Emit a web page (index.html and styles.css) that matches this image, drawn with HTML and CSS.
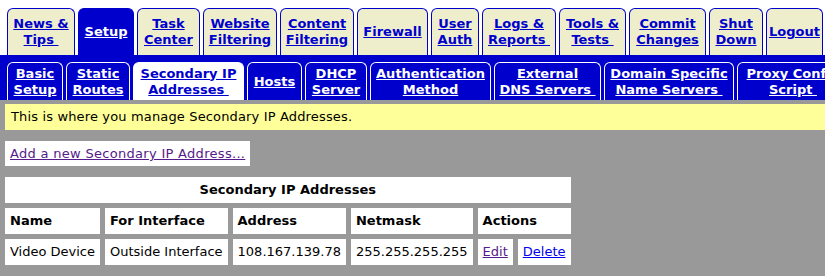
FILE: index.html
```html
<!DOCTYPE html>
<html lang="en">
<head>
    <meta charset="UTF-8">
    <title>Secondary IP Addresses</title>
    <link rel="stylesheet" href="styles.css">
</head>
<body>
    <div class="page">
        <nav class="tabs">
            <a class="tab" href="#">News &amp;<br>Tips&nbsp;</a>
            <a class="tab active" href="#">Setup</a>
            <a class="tab" href="#">Task<br>Center</a>
            <a class="tab" href="#">Website<br>Filtering</a>
            <a class="tab" href="#">Content<br>Filtering</a>
            <a class="tab" href="#">Firewall</a>
            <a class="tab" href="#">User<br>Auth</a>
            <a class="tab" href="#">Logs &amp;<br>Reports&nbsp;</a>
            <a class="tab" href="#">Tools &amp;<br>Tests&nbsp;</a>
            <a class="tab" href="#">Commit<br>Changes</a>
            <a class="tab" href="#">Shut<br>Down</a>
            <a class="tab" href="#">Logout</a>
        </nav>
        <nav class="subtabs">
            <a class="subtab" href="#">Basic<br>Setup</a>
            <a class="subtab" href="#">Static<br>Routes</a>
            <a class="subtab active" href="#">Secondary IP<br>Addresses&nbsp;</a>
            <a class="subtab" href="#">Hosts</a>
            <a class="subtab" href="#">DHCP<br>Server</a>
            <a class="subtab" href="#">Authentication<br>Method</a>
            <a class="subtab" href="#">External<br>DNS Servers&nbsp;</a>
            <a class="subtab" href="#">Domain Specific<br>Name Servers&nbsp;</a>
            <a class="subtab" href="#">Proxy Config<br>Script&nbsp;</a>
        </nav>
        <main class="content">
            <div class="notice">This is where you manage Secondary IP Addresses.</div>
            <div class="add-box"><a class="visited" href="#">Add a new Secondary IP Address...</a></div>
            <table class="list">
                <colgroup>
                    <col class="c-name">
                    <col class="c-iface">
                    <col class="c-addr">
                    <col class="c-mask">
                    <col class="c-edit">
                    <col class="c-del">
                </colgroup>
                <tr>
                    <th class="caption" colspan="6">Secondary IP Addresses</th>
                </tr>
                <tr>
                    <th>Name</th>
                    <th>For Interface</th>
                    <th>Address</th>
                    <th>Netmask</th>
                    <th colspan="2">Actions</th>
                </tr>
                <tr>
                    <td>Video Device</td>
                    <td>Outside Interface</td>
                    <td>108.167.139.78</td>
                    <td>255.255.255.255</td>
                    <td><a class="visited" href="#">Edit</a></td>
                    <td><a href="#">Delete</a></td>
                </tr>
            </table>
        </main>
    </div>
</body>
</html>
```

FILE: styles.css
```css
body {
    margin: 0;
    font-family: "DejaVu Sans", Verdana, sans-serif;
    font-size: 13px;
    color: #000;
    background-color: #999;
}

.page {
    width: 860px;
}

.tabs {
    display: flex;
    gap: 3px;
    padding: 8px 0 0 7px;
    background-color: #fff;
}

.tab {
    display: flex;
    align-items: center;
    justify-content: center;
    box-sizing: border-box;
    height: 47px;
    border: 1px solid #0000cc;
    border-bottom: none;
    border-radius: 6px 6px 0 0;
    background-color: #eeeecc;
    color: #0000cc;
    font-weight: bold;
    line-height: 16px;
    text-align: center;
}

.tab:nth-child(1) { width: 68px; }
.tab:nth-child(2) { width: 56px; }
.tab:nth-child(3) { width: 63px; }
.tab:nth-child(4) { width: 74px; }
.tab:nth-child(5) { width: 74px; }
.tab:nth-child(6) { width: 71px; }
.tab:nth-child(7) { width: 48px; }
.tab:nth-child(8) { width: 74px; }
.tab:nth-child(9) { width: 67px; }
.tab:nth-child(10) { width: 77px; }
.tab:nth-child(11) { width: 54px; }
.tab:nth-child(12) { width: 57px; }

.tab.active {
    background-color: #0000cc;
    color: #fff;
}

.subtabs {
    display: flex;
    gap: 3px;
    padding: 7px 0 0 7px;
    background-color: #0000cc;
}

.subtab {
    display: flex;
    align-items: center;
    justify-content: center;
    flex-shrink: 0;
    box-sizing: border-box;
    height: 38px;
    border: 1px solid #fff;
    border-bottom: none;
    border-radius: 6px 6px 0 0;
    color: #fff;
    font-weight: bold;
    line-height: 16px;
    text-align: center;
}

.subtab:nth-child(1) { width: 56px; }
.subtab:nth-child(2) { width: 64px; }
.subtab:nth-child(3) { width: 111px; }
.subtab:nth-child(4) { width: 55px; }
.subtab:nth-child(5) { width: 62px; }
.subtab:nth-child(6) { width: 121px; }
.subtab:nth-child(7) { width: 107px; }
.subtab:nth-child(8) { width: 130px; }
.subtab:nth-child(9) { width: 112px; }

.subtab.active {
    background-color: #fff;
    color: #0000cc;
}

.content {
    padding: 4px 0 10px 0;
}

.notice {
    margin-left: 5px;
    padding: 5px 6px;
    line-height: 16px;
    letter-spacing: 0.15px;
    background-color: #ffff99;
}

.add-box {
    width: fit-content;
    margin: 11px 0 0 5px;
    padding: 5px 5px 4px 5px;
    line-height: 16px;
    letter-spacing: 0.3px;
    background-color: #fff;
}

a {
    color: #0000ee;
}

a.visited {
    color: #551a8b;
}

.list {
    margin-top: 6px;
    border-spacing: 5px;
}

.list th,
.list td {
    padding: 5px;
    line-height: 16px;
    background-color: #fff;
    text-align: left;
    white-space: nowrap;
}

.list th.caption {
    text-align: center;
}

.c-name { width: 85px; }
.c-iface { width: 116px; }
.c-addr { width: 101px; }
.c-mask { width: 113px; }
.c-edit { width: 25px; }
.c-del { width: 42px; }
```
